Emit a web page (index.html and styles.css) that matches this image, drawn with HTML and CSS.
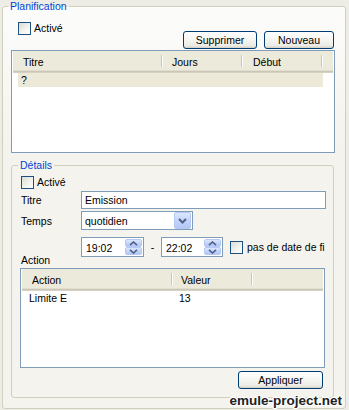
FILE: index.html
```html
<!DOCTYPE html>
<html lang="fr">
<head>
<meta charset="utf-8">
<title>Planification</title>
<link rel="stylesheet" href="styles.css">
</head>
<body>
<fieldset class="group outer">
  <legend class="legend outer-legend">Planification</legend>
  <div class="top-row">
    <label class="check top-check"><span class="box"></span>Activé</label>
    <div class="btns">
      <button class="btn btn-del">Supprimer</button>
      <button class="btn btn-new">Nouveau</button>
    </div>
  </div>
  <div class="list list-plan">
    <div class="lv-head">
      <div class="col c-titre">Titre</div>
      <div class="col c-jours">Jours</div>
      <div class="col c-debut">Début</div>
      <div class="col fill"></div>
    </div>
    <div class="lv-row selected"><span class="cell">?</span></div>
  </div>

  <fieldset class="group details">
    <legend class="legend details-legend">Détails</legend>
    <div class="row row-check">
      <label class="check det-check"><span class="box"></span>Activé</label>
    </div>
    <div class="row row-titre">
      <span class="lbl">Titre</span>
      <div class="input">Emission</div>
    </div>
    <div class="row row-temps">
      <span class="lbl">Temps</span>
      <div class="combo">
        <span class="combo-text">quotidien</span>
        <span class="combo-btn">
          <svg width="15" height="15" viewBox="0 0 15 15"><path d="M4 6l3.5 3.5L11 6" fill="none" stroke="#4D6185" stroke-width="2"/></svg>
        </span>
      </div>
    </div>
    <div class="row row-time">
      <span class="lbl"></span>
      <div class="spin spin-a">
        <span class="spin-text">19:02</span>
        <span class="spin-btns">
          <span class="sb"><svg width="9" height="5" viewBox="0 0 9 5"><path d="M1 4.2L4.5 1 8 4.2" fill="none" stroke="#4D6185" stroke-width="1.6"/></svg></span>
          <span class="sb"><svg width="9" height="5" viewBox="0 0 9 5"><path d="M1 0.8L4.5 4 8 0.8" fill="none" stroke="#4D6185" stroke-width="1.6"/></svg></span>
        </span>
      </div>
      <span class="dash">-</span>
      <div class="spin spin-b">
        <span class="spin-text">22:02</span>
        <span class="spin-btns">
          <span class="sb"><svg width="9" height="5" viewBox="0 0 9 5"><path d="M1 4.2L4.5 1 8 4.2" fill="none" stroke="#4D6185" stroke-width="1.6"/></svg></span>
          <span class="sb"><svg width="9" height="5" viewBox="0 0 9 5"><path d="M1 0.8L4.5 4 8 0.8" fill="none" stroke="#4D6185" stroke-width="1.6"/></svg></span>
        </span>
      </div>
      <label class="check nodate"><span class="box"></span><span class="nodate-text">pas de date de fi</span></label>
    </div>
    <div class="action-lbl">Action</div>
    <div class="list list-action">
      <div class="lv-head">
        <div class="col c-action">Action</div>
        <div class="col c-valeur">Valeur</div>
        <div class="col fill"></div>
      </div>
      <div class="lv-row"><span class="cell cell-a">Limite E</span><span class="cell cell-b">13</span></div>
    </div>
    <div class="row-apply">
      <button class="btn btn-apply">Appliquer</button>
    </div>
  </fieldset>
</fieldset>
<div class="watermark">emule-project.net</div>
</body>
</html>
```
FILE: styles.css
```css
* { box-sizing: border-box; }
html, body { margin: 0; padding: 0; }
body {
  width: 349px;
  height: 410px;
  overflow: hidden;
  position: relative;
  background: #EDECE5;
  font-family: "Liberation Sans", Arial, sans-serif;
  font-size: 10.5px;
  color: #000;
}
.group {
  border: 1px solid #D0D0BF;
  border-radius: 3px;
  margin: 0;
  min-width: 0;
}
.legend {
  color: #0046D5;
  line-height: 12px;
  padding: 0 2px;
}
.outer {
  margin-left: 2px;
  width: 344px;
  height: 409px;
  padding: 8px 8px 0 8px;
  background: linear-gradient(#FCFCFB, #F4F3EE 140px);
}
.outer-legend { margin-left: -3px; }

.top-row {
  display: flex;
  justify-content: space-between;
  align-items: flex-start;
  width: 323px;
  height: 30px;
}
.check {
  display: flex;
  align-items: center;
  gap: 3px;
  line-height: 13px;
  white-space: nowrap;
}
.box {
  flex: none;
  width: 13px;
  height: 13px;
  border: 1px solid #1C5180;
  background: linear-gradient(135deg, #DCDCD6 0%, #F2F2EE 55%, #FFFFFF 100%);
}
.top-check { margin-top: 2px; margin-left: 7px; }
.btns { display: flex; gap: 7px; margin-top: 11px; }
.btn {
  font: inherit;
  height: 18px;
  padding: 0;
  border: 1px solid #003C74;
  border-radius: 3px;
  background: linear-gradient(#FFFFFF, #F6F6F3 45%, #ECEBE5 85%, #D6D0C5);
  color: #000;
}
.btn-del { width: 74px; }
.btn-new { width: 70px; }

.list {
  border: 1px solid #7F9DB9;
  background: #fff;
  padding: 0 1px;
  overflow: hidden;
}
.list-plan { width: 324px; height: 103px; }
.lv-head {
  display: flex;
  height: 22px;
  background: #EBEADB;
  box-shadow: inset 0 -1px #D6D2C2, inset 0 -2px #CBC7B8, inset 0 -3px #E2DECD;
}
.col {
  position: relative;
  flex: none;
  padding: 3px 0 0 10px;
  line-height: 16px;
  white-space: nowrap;
}
.col::after {
  content: "";
  position: absolute;
  right: 1px;
  top: 4px;
  bottom: 6px;
  width: 1px;
  background: #C7C5B2;
  box-shadow: 1px 0 #FFFFFF;
}
.col.fill { flex: 1; }
.col.fill::after { display: none; }
.c-titre { width: 150px; }
.c-jours { width: 80px; padding-left: 9px; }
.c-debut { width: 80px; }
.c-action { width: 151px; }
.c-valeur { width: 80px; padding-left: 8px; }

.lv-row {
  display: flex;
  height: 14px;
  line-height: 14px;
  margin-left: 5px;
  white-space: nowrap;
}
.lv-row.selected { width: 305px; background: #ECE9D8; }
.cell { flex: none; padding-left: 3px; }
.cell-a { width: 146px; padding-left: 2px; }
.cell-b { padding-left: 6px; }

.details {
  margin-top: 6px;
  width: 323px;
  height: 239px;
  padding: 4px 8px 0 8px;
}
.details-legend { margin-left: -2px; }
.row { display: flex; align-items: center; }
.row-check { height: 15px; }
.det-check { margin-left: 1px; }
.row-titre { margin-top: 1px; height: 18px; }
.lbl { flex: none; width: 61px; padding-left: 1px; }
.input {
  flex: none;
  width: 245px;
  height: 18px;
  border: 1px solid #7F9DB9;
  background: #fff;
  padding-left: 3px;
  line-height: 16px;
}
.row-temps { margin-top: 2px; height: 19px; }
.combo {
  flex: none;
  display: flex;
  align-items: center;
  width: 112px;
  height: 19px;
  border: 1px solid #7F9DB9;
  background: #fff;
  padding: 1px;
}
.combo-text { flex: 1; padding-left: 2px; }
.combo-btn {
  flex: none;
  display: flex;
  align-items: center;
  justify-content: center;
  width: 17px;
  height: 17px;
  border: 1px solid #B6C9F4;
  border-radius: 2px;
  background: linear-gradient(#DCE6FD, #C4D4FB 50%, #B3C7F5);
}
.row-time { margin-top: 7px; height: 20px; }
.spin {
  flex: none;
  display: flex;
  height: 20px;
  border: 1px solid #7F9DB9;
  background: #fff;
  padding: 1px;
}
.spin-a { width: 63px; }
.spin-b { width: 62px; }
.spin-text { flex: 1; padding-left: 3px; line-height: 18px; }
.spin-btns { flex: none; width: 17px; display: flex; flex-direction: column; }
.sb {
  flex: 1;
  display: flex;
  align-items: center;
  justify-content: center;
  border: 1px solid #B6C9F4;
  border-radius: 2px;
  background: linear-gradient(#DCE6FD, #C4D4FB 50%, #B3C7F5);
}
.dash { flex: none; width: 17px; text-align: center; }
.nodate { margin-left: 7px; gap: 4px; }
.nodate-text { display: block; }
.action-lbl { margin-top: -3px; line-height: 12px; padding-left: 1px; }
.list-action { margin-top: 2px; width: 305px; height: 100px; }
.row-apply {
  margin-top: 3px;
  display: flex;
  justify-content: flex-end;
  padding-right: 2px;
}
.btn-apply { width: 85px; }

.watermark {
  position: absolute;
  right: 7px;
  bottom: 1px;
  font: bold 13.5px/16px "Liberation Sans", Arial, sans-serif;
  color: #222;
  text-shadow: 1px 0 #fff, -1px 0 #fff, 0 1px #fff, 0 -1px #fff,
    1px 1px #fff, -1px -1px #fff, 1px -1px #fff, -1px 1px #fff;
}
```
